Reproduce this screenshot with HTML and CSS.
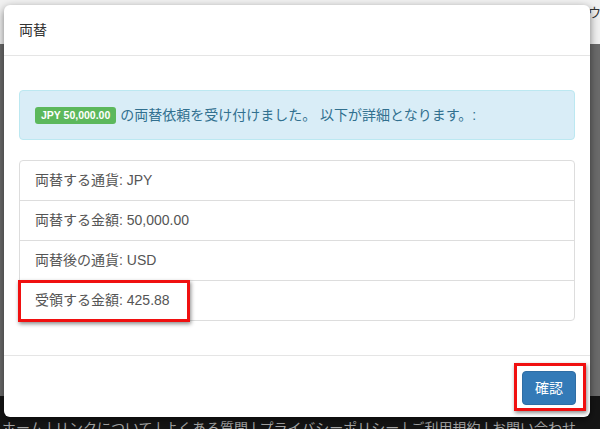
FILE: index.html
```html
<!DOCTYPE html>
<html lang="ja">
<head>
    <meta charset="UTF-8">
    <title>両替</title>
    <link rel="stylesheet" href="styles.css">
</head>
<body>
    <div class="page">
        <div class="page-top"><span class="top-link">ウォ</span></div>
        <div class="page-main"></div>
        <div class="page-foot">ホーム | リンクについて | よくある質問 | プライバシーポリシー | ご利用規約 | お問い合わせ</div>
    </div>

    <div class="modal">
        <div class="modal-header">
            <h4 class="modal-title">両替</h4>
        </div>
        <div class="modal-body">
            <div class="alert-info">
                <span class="label-success">JPY 50,000.00</span> の両替依頼を受け付けました。 以下が詳細となります。:
            </div>
            <ul class="list-group">
                <li class="list-item">両替する通貨: JPY</li>
                <li class="list-item">両替する金額: 50,000.00</li>
                <li class="list-item">両替後の通貨: USD</li>
                <li class="list-item">受領する金額: 425.88<span class="mark mark-row"></span></li>
            </ul>
        </div>
        <div class="modal-footer">
            <span class="btn-wrap">
                <button class="btn-primary">確認</button>
                <span class="mark mark-btn"></span>
            </span>
        </div>
    </div>
</body>
</html>
```

FILE: styles.css
```css
/* page behind the dialog */
body {
    margin: 0;
    width: 600px;
    height: 429px;
    overflow: hidden;
    position: relative;
    font-family: "Liberation Sans", "Noto Sans CJK JP", sans-serif;
    font-size: 14px;
    line-height: 20px;
}

.page {
    display: flex;
    flex-direction: column;
    height: 429px;
}

.page-top {
    height: 44px;
    background: #f1f1f1;
    display: flex;
    justify-content: flex-end;
    color: #333;
    font-size: 13px;
}

.top-link {
    margin: 3px -14px 0 0;
}

.page-main {
    flex: 1;
    background: #6b6b6b;
}

.page-foot {
    height: 33px;
    background: #151515;
    color: #aaa;
    font-size: 14px;
    padding: 22px 0 0 2px;
    box-sizing: border-box;
    white-space: nowrap;
    overflow: hidden;
}

/* dialog */
.modal {
    position: absolute;
    left: 4px;
    top: 5px;
    width: 586px;
    background: #fff;
    border-radius: 6px;
    box-shadow: 0 3px 9px rgba(0,0,0,0.5);
}

.modal-header {
    padding: 15px;
    border-bottom: 1px solid #e5e5e5;
}

.modal-title {
    margin: 0;
    font-size: 14px;
    font-weight: normal;
    color: #333;
}

.modal-body {
    padding: 15px;
}

.alert-info {
    margin-top: 19px;
    margin-bottom: 20px;
    padding: 14px 15px;
    background: #d9edf7;
    border: 1px solid #bce8f1;
    border-radius: 4px;
    color: #31708f;
}

.label-success {
    display: inline-block;
    background: #5cb85c;
    color: #fff;
    font-weight: bold;
    font-size: 10.5px;
    line-height: 13px;
    padding: 2px 6px 2px;
    border-radius: 3px;
    vertical-align: 1px;
}

.list-group {
    list-style: none;
    margin: 0 0 19px;
    padding: 0;
}

.list-item {
    position: relative;
    padding: 10px 15px;
    line-height: 19px;
    border: 1px solid #ddd;
    margin-bottom: -1px;
    color: #555;
}

.list-item:first-child {
    border-radius: 4px 4px 0 0;
}

.list-item:last-child {
    border-radius: 0 0 4px 4px;
    margin-bottom: 0;
}

.modal-footer {
    padding: 15px 14px 12px;
    border-top: 1px solid #e5e5e5;
    text-align: right;
}

.btn-wrap {
    position: relative;
    display: inline-block;
}

.btn-primary {
    display: block;
    font-family: inherit;
    font-size: 14px;
    line-height: 20px;
    padding: 6px 12px;
    color: #fff;
    background: #337ab7;
    border: 1px solid #2e6da4;
    border-radius: 4px;
}

/* red annotation boxes */
.mark {
    position: absolute;
    box-sizing: border-box;
    border: 3px solid #f01010;
    box-shadow: 1px 2px 4px rgba(0,0,0,0.45);
}

.mark-row {
    left: -2px;
    top: -1px;
    width: 172px;
    height: 42px;
}

.mark-btn {
    left: -8px;
    top: -8px;
    right: -10px;
    bottom: -6px;
}
```
